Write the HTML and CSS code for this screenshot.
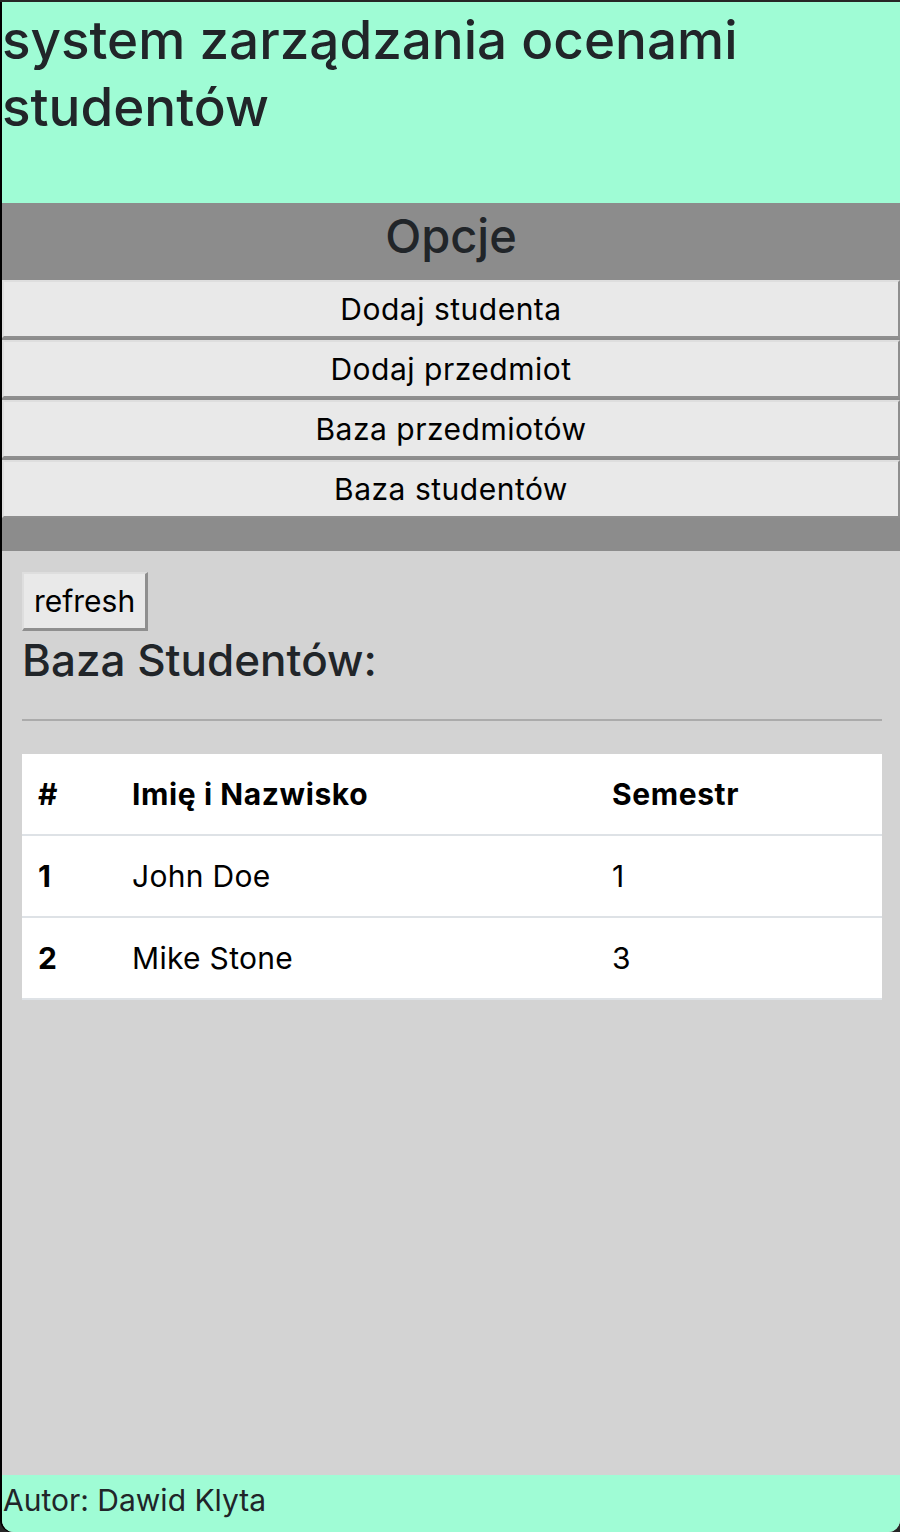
FILE: index.html
```html
<!DOCTYPE html>
<html lang="pl">
<head>
<meta charset="utf-8">
<title>system zarządzania ocenami studentów</title>
<link rel="stylesheet" href="styles.css">
</head>
<body>
<div class="app">
  <header class="header">
    <h1 class="title">system zarządzania ocenami studentów</h1>
  </header>
  <nav class="options">
    <div class="options-title">Opcje</div>
    <button class="opt-btn">Dodaj studenta</button>
    <button class="opt-btn">Dodaj przedmiot</button>
    <button class="opt-btn">Baza przedmiotów</button>
    <button class="opt-btn">Baza studentów</button>
  </nav>
  <main class="content">
    <button class="refresh">refresh</button>
    <h3 class="section-title">Baza Studentów:</h3>
    <hr class="divider">
    <table class="table">
      <thead>
        <tr><th class="c1">#</th><th class="c2">Imię i Nazwisko</th><th class="c3">Semestr</th></tr>
      </thead>
      <tbody>
        <tr><th>1</th><td>John Doe</td><td>1</td></tr>
        <tr><th>2</th><td>Mike Stone</td><td>3</td></tr>
      </tbody>
    </table>
  </main>
  <footer class="footer">Autor: Dawid Klyta</footer>
</div>
</body>
</html>
```
FILE: styles.css
```css
html, body {
  margin: 0;
  padding: 0;
  height: 100%;
}
body {
  background: #262626;
  font-family: Inter, "Noto Sans", "Liberation Sans", sans-serif;
  color: #212529;
}
.app {
  margin: 2px 0 0 2px;
  height: calc(100% - 2px);
  display: flex;
  flex-direction: column;
  border-radius: 0 0 12px 12px;
  overflow: hidden;
  background: #d3d3d3;
  box-shadow: -2px 0 0 #000;
}
.header {
  background: #9ffcd5;
  padding: 5px 0 62px 0;
}
.title {
  margin: 0;
  font-size: 53px;
  line-height: 67px;
  font-weight: 500;
  color: #212529;
}
.options {
  background: #8c8c8c;
  display: flex;
  flex-direction: column;
  gap: 2px;
  padding-bottom: 33px;
}
.options-title {
  height: 77px;
  line-height: 66px;
  text-align: center;
  font-size: 47px;
  font-weight: 500;
  color: #212529;
  margin-bottom: -2px;
}
.opt-btn {
  height: 58px;
  margin: 0;
  background: #e9e9e9;
  border: 2px solid;
  border-color: #dedede #8f8f8f #8f8f8f #dedede;
  font-family: inherit;
  font-size: 30px;
  letter-spacing: 0.5px;
  color: #000;
  padding: 0;
}
.content {
  flex: 1;
  background: #d3d3d3;
  padding: 21px 18px 0 20px;
}
.refresh {
  display: block;
  height: 59px;
  width: 126px;
  margin: 0;
  padding: 0;
  background: #e9e9e9;
  border: 2px solid;
  border-color: #dedede #8f8f8f #8f8f8f #dedede;
  border-width: 2px 3px 3px 2px;
  font-family: inherit;
  font-size: 30px;
  color: #000;
}
.section-title {
  margin: 0;
  font-size: 44px;
  line-height: 59px;
  font-weight: 500;
  color: #212529;
}
.divider {
  margin: 29px 0 33px;
  border: 0;
  border-top: 2px solid #ababab;
}
.table {
  width: 100%;
  border-collapse: collapse;
  background: #fff;
  font-size: 30px;
  color: #000;
}
.table th, .table td {
  text-align: left;
  padding: 19px 16px;
  line-height: 42px;
  border-bottom: 2px solid #dee2e6;
}
.table th {
  font-weight: 700;
  letter-spacing: 0.6px;
}
.table td {
  font-weight: 400;
  letter-spacing: 0.3px;
}
.c1 { width: 62px; }
.c2 { width: 448px; }
.footer {
  background: #9ffcd5;
  font-size: 30px;
  line-height: 42px;
  padding: 4px 0 11px 1px;
  color: #212529;
}
```
